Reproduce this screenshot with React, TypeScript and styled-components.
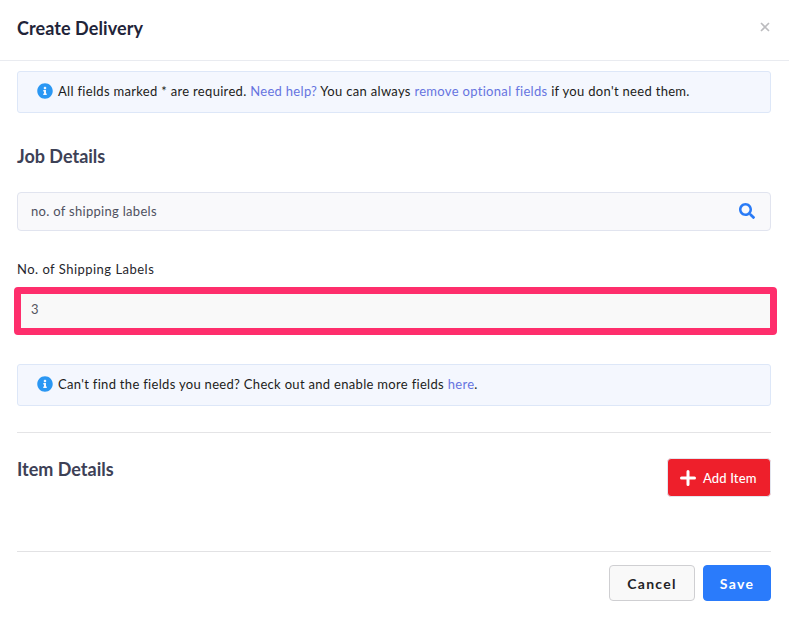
import React from "react";
import styled, { createGlobalStyle } from "styled-components";
import { FaInfoCircle, FaSearch } from "react-icons/fa";

const GlobalStyle = createGlobalStyle`
  html, body {
    margin: 0;
    padding: 0;
    background: #fff;
    font-family: "Lato", "Liberation Sans", sans-serif;
  }
`;

const Modal = styled.div`
  width: 789px;
  height: 621px;
  box-sizing: border-box;
  overflow: hidden;
`;

const Header = styled.header`
  height: 61px;
  box-sizing: border-box;
  display: flex;
  align-items: center;
  justify-content: space-between;
  padding: 0 19px 5px 17px;
  border-bottom: 1px solid #e9ebf0;
`;

const Title = styled.h1`
  margin: 0;
  font-size: 18px;
  font-weight: 700;
  letter-spacing: 0.08px;
  color: #1f2439;
`;

const Close = styled.span`
  display: flex;
  margin-top: -2px;
  color: #bcbcbf;
`;

const Body = styled.div`
  padding: 10px 18px 0 17px;
`;

const Notice = styled.div<{ $top?: number }>`
  display: flex;
  align-items: center;
  gap: 5px;
  height: 42px;
  box-sizing: border-box;
  margin-top: ${(p) => p.$top ?? 0}px;
  padding: 0 19px 2px;
  background: #f4f7fe;
  border: 1px solid #dde7f8;
  border-radius: 3px;
  font-size: 13px;
  letter-spacing: 0.31px;
  color: #1c1c20;
  white-space: pre;
  svg {
    color: #2a97f3;
    flex: none;
  }
`;

const Anchor = styled.a`
  color: #6674e0;
`;

const SectionTitle = styled.h2`
  margin: 0;
  font-size: 18px;
  line-height: 24px;
  font-weight: 700;
  color: #3d4156;
`;

const JobTitle = styled(SectionTitle)`
  margin-top: 31px;
`;

const SearchBox = styled.div`
  display: flex;
  align-items: center;
  justify-content: space-between;
  height: 39px;
  box-sizing: border-box;
  margin-top: 24px;
  padding: 0 15px 1px 13px;
  background: #f9f9fb;
  border: 1px solid #e1e4ef;
  border-radius: 4px;
  font-size: 13px;
  letter-spacing: 0.3px;
  color: #4f5160;
  svg {
    color: #2a7bf6;
  }
`;

const Label = styled.label`
  display: block;
  margin-top: 30px;
  font-size: 13px;
  line-height: 17px;
  letter-spacing: 0.48px;
  color: #26262c;
`;

const Field = styled.div`
  display: flex;
  align-items: center;
  height: 48px;
  margin: 9px -6px 0 -3px;
  padding: 0 0 4px 10px;
  background: #f9f9f9;
  border: 7px solid #fe2e6c;
  border-radius: 4px;
  box-sizing: border-box;
  font-size: 13px;
  color: #55565f;
`;

const Divider = styled.hr`
  margin: 26px 0 0;
  border: 0;
  border-top: 1px solid #e4e4e6;
`;

const ItemRow = styled.div`
  display: flex;
  align-items: flex-start;
  justify-content: space-between;
  height: 118px;
  padding-top: 25px;
  box-sizing: border-box;
`;

const ItemTitle = styled(SectionTitle)`
  margin-top: -1px;
`;

const AddButton = styled.button`
  display: flex;
  align-items: center;
  gap: 7px;
  width: 104px;
  height: 39px;
  box-sizing: border-box;
  padding: 0 0 0 12px;
  background: #ee1f2b;
  color: #fff;
  border: 1px solid #e3e5ee;
  border-radius: 4px;
  font: 500 13px "Lato", sans-serif;
  letter-spacing: 0.15px;
`;

const FooterDivider = styled.hr`
  margin: 0;
  border: 0;
  border-top: 1px solid #e2e2e4;
`;

const Footer = styled.footer`
  display: flex;
  justify-content: flex-end;
  gap: 8px;
  margin-top: 13px;
`;

const FooterButton = styled.button<{ $primary?: boolean }>`
  height: 36px;
  width: ${(p) => (p.$primary ? 68 : 86)}px;
  box-sizing: border-box;
  padding: 0;
  border-radius: 4px;
  border: 1px solid ${(p) => (p.$primary ? "#2a7bfb" : "#cfcfd2")};
  background: ${(p) => (p.$primary ? "#2a7bfb" : "#f9f9f9")};
  color: ${(p) => (p.$primary ? "#fff" : "#232326")};
  font: 700 14px "Lato", sans-serif;
  letter-spacing: 1.3px;
`;

const CloseIcon = () => (
  <svg width="10" height="10" viewBox="0 0 10 10">
    <path d="M1 1l8 8M9 1L1 9" stroke="currentColor" strokeWidth="1.6" />
  </svg>
);

const PlusIcon = () => (
  <svg width="16" height="16" viewBox="0 0 16 16">
    <path d="M8 1.5v13M1.5 8h13" stroke="#fff" strokeWidth="3" strokeLinecap="round" />
  </svg>
);

export default function App() {
  return (
    <Modal>
      <GlobalStyle />
      <Header>
        <Title>Create Delivery</Title>
        <Close>
          <CloseIcon />
        </Close>
      </Header>
      <Body>
        <Notice>
          <FaInfoCircle size={16} />
          <span>
            All fields marked * are required. <Anchor>Need help?</Anchor> You can always{" "}
            <Anchor>remove optional fields</Anchor> if you don't need them.
          </span>
        </Notice>
        <JobTitle>Job Details</JobTitle>
        <SearchBox>
          no. of shipping labels
          <FaSearch size={16} />
        </SearchBox>
        <Label>No. of Shipping Labels</Label>
        <Field>3</Field>
        <Notice $top={29}>
          <FaInfoCircle size={16} />
          <span>
            Can't find the fields you need? Check out and enable more fields <Anchor>here</Anchor>.
          </span>
        </Notice>
        <Divider />
        <ItemRow>
          <ItemTitle>Item Details</ItemTitle>
          <AddButton>
            <PlusIcon />
            Add Item
          </AddButton>
        </ItemRow>
        <FooterDivider />
        <Footer>
          <FooterButton>Cancel</FooterButton>
          <FooterButton $primary>Save</FooterButton>
        </Footer>
      </Body>
    </Modal>
  );
}
